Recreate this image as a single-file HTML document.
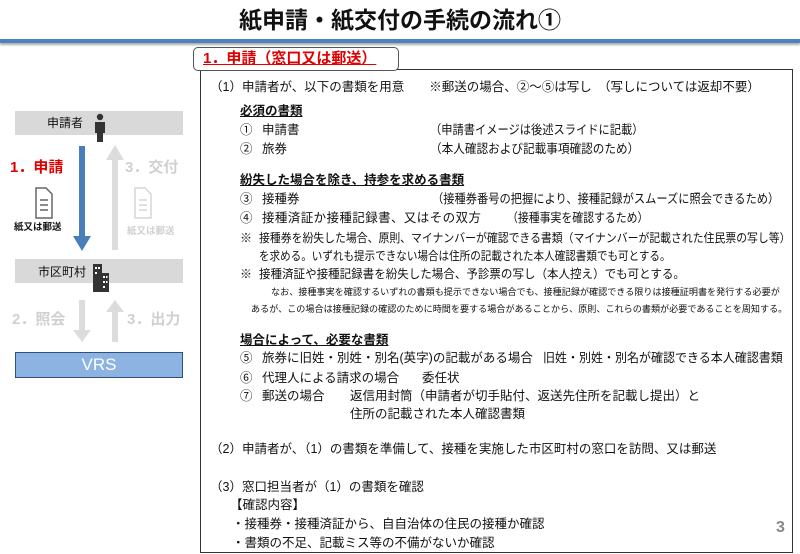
<!DOCTYPE html>
<html><head><meta charset="utf-8"><style>
*{margin:0;padding:0;box-sizing:border-box}
body{width:800px;height:554px;background:#fff;position:relative;overflow:hidden;font-family:"Liberation Sans","Noto Sans CJK JP",sans-serif;color:#111}
.a{position:absolute;white-space:nowrap;transform-origin:0 0}
.t{font-size:12.5px;line-height:15px}
.s{font-size:9.1px;line-height:11px}
.b{font-weight:bold}
.u{text-decoration:underline}
.g{color:#d0d0d0}
</style></head><body>
<div class="a b" style="left:0;width:800px;top:5px;text-align:center;font-size:23px;line-height:30px">紙申請・紙交付の手続の流れ①</div>
<div class="a" style="left:0;top:39px;width:800px;height:4px;background:#4f81bd;box-shadow:0 2px 2px #aaa"></div>

<div class="a" style="left:200px;top:69px;width:593px;height:484px;border:1px solid #333"></div>
<div class="a" style="left:193px;top:47px;width:206px;height:24px;border:1px solid #555;border-radius:5px;background:#fff"></div>
<div class="a b" style="left:203px;top:49px;font-size:15px;line-height:20px;color:#e00000;text-decoration:underline">1．申請（窓口又は郵送）</div>

<div class="a t" style="left:210px;top:80px">（1）申請者が、以下の書類を用意　　※郵送の場合、②～⑤は写し　（写しについては返却不要）</div>
<div class="a t b u" style="left:240px;top:104px">必須の書類</div>
<div class="a t" style="left:240px;top:123px">①</div><div class="a t" style="left:262px;top:123px">申請書</div>
<div class="a t" style="left:430px;top:123px;transform:scaleX(.9)">（申請書イメージは後述スライドに記載）</div>
<div class="a t" style="left:240px;top:142px">②</div><div class="a t" style="left:262px;top:142px">旅券</div>
<div class="a t" style="left:430px;top:142px;transform:scaleX(.93)">（本人確認および記載事項確認のため）</div>
<div class="a t b u" style="left:240px;top:173px">紛失した場合を除き、持参を求める書類</div>
<div class="a t" style="left:240px;top:192px">③</div><div class="a t" style="left:262px;top:192px">接種券</div>
<div class="a t" style="left:432px;top:192px;transform:scaleX(.9)">（接種券番号の把握により、接種記録がスムーズに照会できるため）</div>
<div class="a t" style="left:240px;top:211px">④</div><div class="a t" style="left:262px;top:211px;letter-spacing:0.4px">接種済証か接種記録書、又はその双方</div>
<div class="a t" style="left:507px;top:211px;transform:scaleX(.87)">（接種事実を確認するため）</div>
<div class="a t" style="left:240px;top:231px;font-size:12px">※</div>
<div class="a t" style="left:259px;top:231px;font-size:12px;transform:scaleX(.905)">接種券を紛失した場合、原則、マイナンバーが確認できる書類（マイナンバーが記載された住民票の写し等）</div>
<div class="a t" style="left:259px;top:249px;font-size:12px;transform:scaleX(.88)">を求める。いずれも提示できない場合は住所の記載された本人確認書類でも可とする。</div>
<div class="a t" style="left:240px;top:267px;font-size:12px">※</div>
<div class="a t" style="left:259px;top:267px;font-size:12px;transform:scaleX(.96)">接種済証や接種記録書を紛失した場合、予診票の写し（本人控え）でも可とする。</div>
<div class="a s" style="left:271px;top:287px">なお、接種事実を確認するいずれの書類も提示できない場合でも、接種記録が確認できる限りは接種証明書を発行する必要が</div>
<div class="a s" style="left:251px;top:304px">あるが、この場合は接種記録の確認のために時間を要する場合があることから、原則、これらの書類が必要であることを周知する。</div>
<div class="a t b u" style="left:240px;top:333px">場合によって、必要な書類</div>
<div class="a t" style="left:240px;top:351px">⑤</div><div class="a t" style="left:262px;top:351px">旅券に旧姓・別姓・別名(英字)の記載がある場合</div>
<div class="a t" style="left:543px;top:351px;transform:scaleX(.96)">旧姓・別姓・別名が確認できる本人確認書類</div>
<div class="a t" style="left:240px;top:371px">⑥</div><div class="a t" style="left:262px;top:371px">代理人による請求の場合</div>
<div class="a t" style="left:422px;top:371px">委任状</div>
<div class="a t" style="left:240px;top:389px">⑦</div><div class="a t" style="left:262px;top:389px">郵送の場合</div>
<div class="a t" style="left:350px;top:389px">返信用封筒（申請者が切手貼付、返送先住所を記載し提出）と</div>
<div class="a t" style="left:350px;top:407px">住所の記載された本人確認書類</div>
<div class="a t" style="left:210px;top:442px">（2）申請者が、（1）の書類を準備して、接種を実施した市区町村の窓口を訪問、又は郵送</div>
<div class="a t" style="left:210px;top:480px">（3）窓口担当者が（1）の書類を確認</div>
<div class="a t" style="left:230px;top:498px">【確認内容】</div>
<div class="a t" style="left:232px;top:517px">・接種券・接種済証から、自自治体の住民の接種か確認</div>
<div class="a t" style="left:232px;top:536px">・書類の不足、記載ミス等の不備がないか確認</div>
<div class="a b" style="left:776px;top:519px;font-size:16px;color:#888">3</div>

<div class="a" style="left:15px;top:111px;width:168px;height:24px;background:#d9d9d9"></div>
<div class="a" style="left:47px;top:116px;font-size:12px;line-height:15px">申請者</div>
<svg class="a" style="left:93px;top:113px" width="14" height="30" viewBox="0 0 14 30"><circle cx="7" cy="4" r="3.2" fill="#333"/><path d="M2 9h10v11h-2v9H4v-9H2z" fill="#333"/></svg>
<div class="a" style="left:15px;top:259px;width:168px;height:24px;background:#d9d9d9"></div>
<div class="a" style="left:38px;top:265px;font-size:12px;line-height:15px">市区町村</div>
<svg class="a" style="left:92px;top:263px" width="18" height="30" viewBox="0 0 18 30"><rect x="1" y="1" width="9" height="28" fill="#333"/><rect x="8" y="10" width="9" height="19" fill="#333"/><g fill="#fff"><rect x="3" y="4" width="2" height="2"/><rect x="6" y="4" width="2" height="2"/><rect x="3" y="9" width="2" height="2"/><rect x="11" y="13" width="2" height="2"/><rect x="14" y="13" width="1.5" height="2"/><rect x="11" y="18" width="2" height="2"/><rect x="14" y="18" width="1.5" height="2"/><rect x="11" y="23" width="2" height="2"/></g></svg>

<svg class="a" style="left:0;top:0" width="200" height="400">
<path d="M79 146h6v90h6l-9 15-9-15h6z" fill="#4a7ebb"/>
<path d="M112 250h6v-90h6l-9-15-9 15h6z" fill="#dcdcdc"/>
<path d="M79 300h6v30h6l-9 12-9-12h6z" fill="#dcdcdc"/>
<path d="M112 342h6v-30h6l-9-12-9 12h6z" fill="#dcdcdc"/>
<g fill="none" stroke="#666" stroke-width="1.5"><path d="M36 188h10l6 6v24H36z"/><path d="M40 200h8M40 205h8M40 210h8"/></g>
<g fill="none" stroke="#d6d6d6" stroke-width="1.5"><path d="M135 188h10l6 6v24h-16z"/><path d="M139 200h8M139 205h8M139 210h8"/></g>
</svg>
<div class="a b" style="left:10px;top:158px;font-size:15px;line-height:20px;color:#e00000">1．申請</div>
<div class="a b" style="left:14px;top:222px;font-size:9.5px;line-height:12px">紙又は郵送</div>
<div class="a b g" style="left:125px;top:158px;font-size:15px;line-height:20px">3．交付</div>
<div class="a b g" style="left:127px;top:226px;font-size:9.5px;line-height:12px">紙又は郵送</div>
<div class="a b g" style="left:12px;top:310px;font-size:15px;line-height:20px">2．照会</div>
<div class="a b g" style="left:127px;top:310px;font-size:15px;line-height:20px">3．出力</div>
<div class="a" style="left:15px;top:352px;width:168px;height:26px;background:#8db3e2;border:1px solid #2f4f7f;color:#fff;text-align:center;font-size:17px;line-height:24px">VRS</div>
</body></html>
